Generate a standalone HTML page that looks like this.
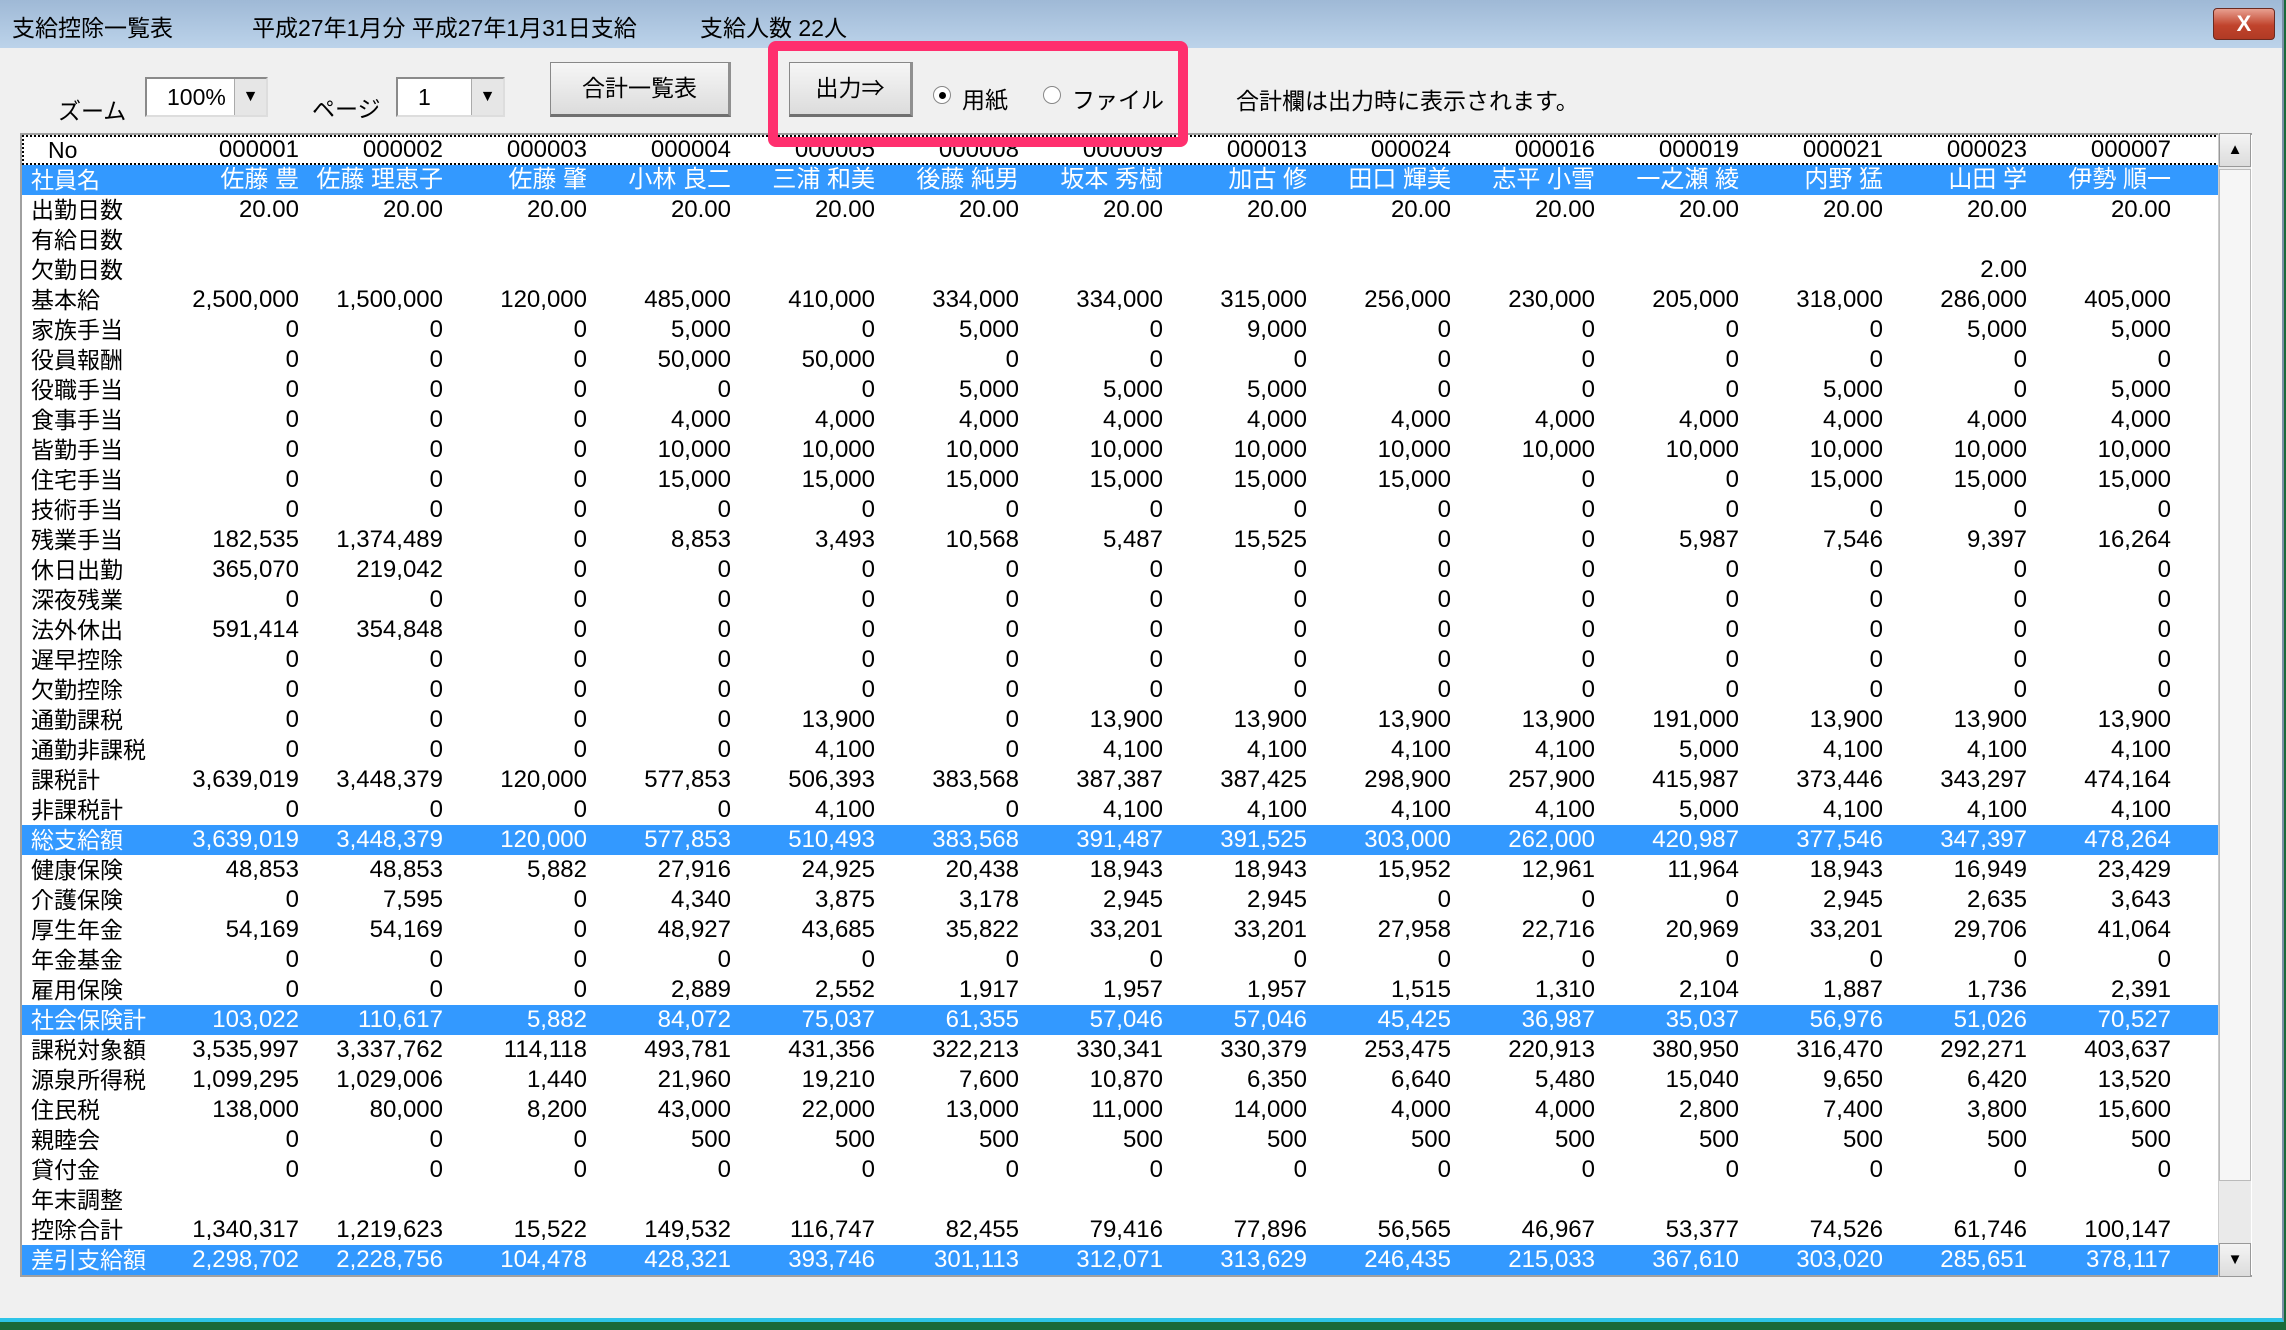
<!DOCTYPE html>
<html><head><meta charset="utf-8">
<style>
*{margin:0;padding:0;box-sizing:border-box}
body{width:2286px;height:1330px;background:#1a6a3a;position:relative;overflow:hidden;font-family:"Liberation Sans","Noto Sans CJK JP",sans-serif;color:#000}
.win{position:absolute;left:0;top:0;width:2284px;height:1322px;background:#f0f0f0;border-right:2px solid #7a8fa8;border-bottom:4px solid #2ec4e8}
.title{position:absolute;left:0;top:0;width:100%;height:48px;background:linear-gradient(#9fb9d6,#bcd3ea);}
.title span{position:absolute;top:9px;font-size:23px}
.close{position:absolute;left:2213px;top:8px;width:62px;height:32px;background:linear-gradient(#e8a090,#c0432c 55%,#b03a24);border:1px solid #6a2a20;border-radius:4px;color:#fff;font-size:22px;font-weight:bold;text-align:center;line-height:30px}
.lbl{position:absolute;font-size:23px}
.combo{position:absolute;top:77px;height:40px;background:#fff;border:2px solid #8a8a8a;border-right-color:#ddd;border-bottom-color:#ddd;font-size:23px;line-height:36px;padding-left:20px}
.combo .ar{position:absolute;right:0;top:0;width:32px;height:36px;background:#e6e6e6;border-left:1px solid #aaa;font-size:16px;text-align:center;line-height:36px}
.btn{position:absolute;top:62px;height:55px;background:linear-gradient(#f6f6f6,#dcdcdc);border:1px solid #888;border-bottom:3px solid #707070;border-right:3px solid #909090;font-size:23px;text-align:center;line-height:50px}
.radio{position:absolute;top:86px;width:18px;height:18px;border-radius:50%;border:1px solid #888;background:#fff}
.pink{position:absolute;left:768px;top:41px;width:420px;height:106px;border:10px solid #ff2f6e;border-radius:8px;z-index:5}
.tbl{position:absolute;left:20px;top:133px;width:2232px;height:1144px;background:#fff;border:2px solid #a0a0a0;border-right:none;overflow:hidden}
.r{position:absolute;left:133px;height:30px;width:2100px;font-size:24px;line-height:30px;white-space:nowrap}
.r b{position:absolute;left:-124px;font-weight:normal;font-size:23px}
.r i{font-style:normal;display:inline-block;width:144px;text-align:right}
.hl{background:#3399ff;color:#fff;left:-2px;padding-left:135px;width:2200px}
.hl b{left:11px}
.sb{position:absolute;left:2218px;top:133px;width:33px;height:1144px;background:#eaeaea;border-left:1px solid #ccc}
.sbb{position:absolute;left:0;width:32px;height:34px;background:linear-gradient(#f4f4f4,#dcdcdc);border:1px solid #999;font-size:15px;text-align:center;line-height:32px}
.thumb{position:absolute;left:0;top:36px;width:32px;height:1012px;background:#f6f6f6;border:1px solid #bbb}
</style></head><body>
<div class="win">
<div class="title"><span style="left:12px">支給控除一覧表</span><span style="left:252px">平成27年1月分 平成27年1月31日支給</span><span style="left:700px">支給人数 22人</span><div class="close">X</div></div>
<div class="lbl" style="left:58px;top:92px">ズーム</div>
<div class="combo" style="left:145px;width:123px">100%<div class="ar">▼</div></div>
<div class="lbl" style="left:312px;top:90px">ページ</div>
<div class="combo" style="left:396px;width:109px">1<div class="ar">▼</div></div>
<div class="btn" style="left:550px;width:181px">合計一覧表</div>
<div class="btn" style="left:789px;width:124px">出力⇒</div>
<div class="radio" style="left:933px"><div style="position:absolute;left:5px;top:5px;width:7px;height:7px;border-radius:50%;background:#000"></div></div>
<div class="lbl" style="left:962px;top:81px">用紙</div>
<div class="radio" style="left:1043px"></div>
<div class="lbl" style="left:1072px;top:81px">ファイル</div>
<div class="lbl" style="left:1236px;top:82px">合計欄は出力時に表示されます。</div>
<div class="pink"></div>
<div class="tbl">
<div class="r" style="top:0;border:2px dotted #000;left:0;padding-left:131px;width:2198px;line-height:26px"><b style="left:24px">No</b><i>000001</i><i>000002</i><i>000003</i><i>000004</i><i>000005</i><i>000008</i><i>000009</i><i>000013</i><i>000024</i><i>000016</i><i>000019</i><i>000021</i><i>000023</i><i>000007</i></div>
<div class="r hl" style="top:30px"><b>社員名</b><i>佐藤 豊</i><i>佐藤 理恵子</i><i>佐藤 肇</i><i>小林 良二</i><i>三浦 和美</i><i>後藤 純男</i><i>坂本 秀樹</i><i>加古 修</i><i>田口 輝美</i><i>志平 小雪</i><i>一之瀬 綾</i><i>内野 猛</i><i>山田 学</i><i>伊勢 順一</i></div>
<div class="r" style="top:60px"><b>出勤日数</b><i>20.00</i><i>20.00</i><i>20.00</i><i>20.00</i><i>20.00</i><i>20.00</i><i>20.00</i><i>20.00</i><i>20.00</i><i>20.00</i><i>20.00</i><i>20.00</i><i>20.00</i><i>20.00</i></div>
<div class="r" style="top:90px"><b>有給日数</b></div>
<div class="r" style="top:120px"><b>欠勤日数</b><i></i><i></i><i></i><i></i><i></i><i></i><i></i><i></i><i></i><i></i><i></i><i></i><i>2.00</i><i></i></div>
<div class="r" style="top:150px"><b>基本給</b><i>2,500,000</i><i>1,500,000</i><i>120,000</i><i>485,000</i><i>410,000</i><i>334,000</i><i>334,000</i><i>315,000</i><i>256,000</i><i>230,000</i><i>205,000</i><i>318,000</i><i>286,000</i><i>405,000</i></div>
<div class="r" style="top:180px"><b>家族手当</b><i>0</i><i>0</i><i>0</i><i>5,000</i><i>0</i><i>5,000</i><i>0</i><i>9,000</i><i>0</i><i>0</i><i>0</i><i>0</i><i>5,000</i><i>5,000</i></div>
<div class="r" style="top:210px"><b>役員報酬</b><i>0</i><i>0</i><i>0</i><i>50,000</i><i>50,000</i><i>0</i><i>0</i><i>0</i><i>0</i><i>0</i><i>0</i><i>0</i><i>0</i><i>0</i></div>
<div class="r" style="top:240px"><b>役職手当</b><i>0</i><i>0</i><i>0</i><i>0</i><i>0</i><i>5,000</i><i>5,000</i><i>5,000</i><i>0</i><i>0</i><i>0</i><i>5,000</i><i>0</i><i>5,000</i></div>
<div class="r" style="top:270px"><b>食事手当</b><i>0</i><i>0</i><i>0</i><i>4,000</i><i>4,000</i><i>4,000</i><i>4,000</i><i>4,000</i><i>4,000</i><i>4,000</i><i>4,000</i><i>4,000</i><i>4,000</i><i>4,000</i></div>
<div class="r" style="top:300px"><b>皆勤手当</b><i>0</i><i>0</i><i>0</i><i>10,000</i><i>10,000</i><i>10,000</i><i>10,000</i><i>10,000</i><i>10,000</i><i>10,000</i><i>10,000</i><i>10,000</i><i>10,000</i><i>10,000</i></div>
<div class="r" style="top:330px"><b>住宅手当</b><i>0</i><i>0</i><i>0</i><i>15,000</i><i>15,000</i><i>15,000</i><i>15,000</i><i>15,000</i><i>15,000</i><i>0</i><i>0</i><i>15,000</i><i>15,000</i><i>15,000</i></div>
<div class="r" style="top:360px"><b>技術手当</b><i>0</i><i>0</i><i>0</i><i>0</i><i>0</i><i>0</i><i>0</i><i>0</i><i>0</i><i>0</i><i>0</i><i>0</i><i>0</i><i>0</i></div>
<div class="r" style="top:390px"><b>残業手当</b><i>182,535</i><i>1,374,489</i><i>0</i><i>8,853</i><i>3,493</i><i>10,568</i><i>5,487</i><i>15,525</i><i>0</i><i>0</i><i>5,987</i><i>7,546</i><i>9,397</i><i>16,264</i></div>
<div class="r" style="top:420px"><b>休日出勤</b><i>365,070</i><i>219,042</i><i>0</i><i>0</i><i>0</i><i>0</i><i>0</i><i>0</i><i>0</i><i>0</i><i>0</i><i>0</i><i>0</i><i>0</i></div>
<div class="r" style="top:450px"><b>深夜残業</b><i>0</i><i>0</i><i>0</i><i>0</i><i>0</i><i>0</i><i>0</i><i>0</i><i>0</i><i>0</i><i>0</i><i>0</i><i>0</i><i>0</i></div>
<div class="r" style="top:480px"><b>法外休出</b><i>591,414</i><i>354,848</i><i>0</i><i>0</i><i>0</i><i>0</i><i>0</i><i>0</i><i>0</i><i>0</i><i>0</i><i>0</i><i>0</i><i>0</i></div>
<div class="r" style="top:510px"><b>遅早控除</b><i>0</i><i>0</i><i>0</i><i>0</i><i>0</i><i>0</i><i>0</i><i>0</i><i>0</i><i>0</i><i>0</i><i>0</i><i>0</i><i>0</i></div>
<div class="r" style="top:540px"><b>欠勤控除</b><i>0</i><i>0</i><i>0</i><i>0</i><i>0</i><i>0</i><i>0</i><i>0</i><i>0</i><i>0</i><i>0</i><i>0</i><i>0</i><i>0</i></div>
<div class="r" style="top:570px"><b>通勤課税</b><i>0</i><i>0</i><i>0</i><i>0</i><i>13,900</i><i>0</i><i>13,900</i><i>13,900</i><i>13,900</i><i>13,900</i><i>191,000</i><i>13,900</i><i>13,900</i><i>13,900</i></div>
<div class="r" style="top:600px"><b>通勤非課税</b><i>0</i><i>0</i><i>0</i><i>0</i><i>4,100</i><i>0</i><i>4,100</i><i>4,100</i><i>4,100</i><i>4,100</i><i>5,000</i><i>4,100</i><i>4,100</i><i>4,100</i></div>
<div class="r" style="top:630px"><b>課税計</b><i>3,639,019</i><i>3,448,379</i><i>120,000</i><i>577,853</i><i>506,393</i><i>383,568</i><i>387,387</i><i>387,425</i><i>298,900</i><i>257,900</i><i>415,987</i><i>373,446</i><i>343,297</i><i>474,164</i></div>
<div class="r" style="top:660px"><b>非課税計</b><i>0</i><i>0</i><i>0</i><i>0</i><i>4,100</i><i>0</i><i>4,100</i><i>4,100</i><i>4,100</i><i>4,100</i><i>5,000</i><i>4,100</i><i>4,100</i><i>4,100</i></div>
<div class="r hl" style="top:690px"><b>総支給額</b><i>3,639,019</i><i>3,448,379</i><i>120,000</i><i>577,853</i><i>510,493</i><i>383,568</i><i>391,487</i><i>391,525</i><i>303,000</i><i>262,000</i><i>420,987</i><i>377,546</i><i>347,397</i><i>478,264</i></div>
<div class="r" style="top:720px"><b>健康保険</b><i>48,853</i><i>48,853</i><i>5,882</i><i>27,916</i><i>24,925</i><i>20,438</i><i>18,943</i><i>18,943</i><i>15,952</i><i>12,961</i><i>11,964</i><i>18,943</i><i>16,949</i><i>23,429</i></div>
<div class="r" style="top:750px"><b>介護保険</b><i>0</i><i>7,595</i><i>0</i><i>4,340</i><i>3,875</i><i>3,178</i><i>2,945</i><i>2,945</i><i>0</i><i>0</i><i>0</i><i>2,945</i><i>2,635</i><i>3,643</i></div>
<div class="r" style="top:780px"><b>厚生年金</b><i>54,169</i><i>54,169</i><i>0</i><i>48,927</i><i>43,685</i><i>35,822</i><i>33,201</i><i>33,201</i><i>27,958</i><i>22,716</i><i>20,969</i><i>33,201</i><i>29,706</i><i>41,064</i></div>
<div class="r" style="top:810px"><b>年金基金</b><i>0</i><i>0</i><i>0</i><i>0</i><i>0</i><i>0</i><i>0</i><i>0</i><i>0</i><i>0</i><i>0</i><i>0</i><i>0</i><i>0</i></div>
<div class="r" style="top:840px"><b>雇用保険</b><i>0</i><i>0</i><i>0</i><i>2,889</i><i>2,552</i><i>1,917</i><i>1,957</i><i>1,957</i><i>1,515</i><i>1,310</i><i>2,104</i><i>1,887</i><i>1,736</i><i>2,391</i></div>
<div class="r hl" style="top:870px"><b>社会保険計</b><i>103,022</i><i>110,617</i><i>5,882</i><i>84,072</i><i>75,037</i><i>61,355</i><i>57,046</i><i>57,046</i><i>45,425</i><i>36,987</i><i>35,037</i><i>56,976</i><i>51,026</i><i>70,527</i></div>
<div class="r" style="top:900px"><b>課税対象額</b><i>3,535,997</i><i>3,337,762</i><i>114,118</i><i>493,781</i><i>431,356</i><i>322,213</i><i>330,341</i><i>330,379</i><i>253,475</i><i>220,913</i><i>380,950</i><i>316,470</i><i>292,271</i><i>403,637</i></div>
<div class="r" style="top:930px"><b>源泉所得税</b><i>1,099,295</i><i>1,029,006</i><i>1,440</i><i>21,960</i><i>19,210</i><i>7,600</i><i>10,870</i><i>6,350</i><i>6,640</i><i>5,480</i><i>15,040</i><i>9,650</i><i>6,420</i><i>13,520</i></div>
<div class="r" style="top:960px"><b>住民税</b><i>138,000</i><i>80,000</i><i>8,200</i><i>43,000</i><i>22,000</i><i>13,000</i><i>11,000</i><i>14,000</i><i>4,000</i><i>4,000</i><i>2,800</i><i>7,400</i><i>3,800</i><i>15,600</i></div>
<div class="r" style="top:990px"><b>親睦会</b><i>0</i><i>0</i><i>0</i><i>500</i><i>500</i><i>500</i><i>500</i><i>500</i><i>500</i><i>500</i><i>500</i><i>500</i><i>500</i><i>500</i></div>
<div class="r" style="top:1020px"><b>貸付金</b><i>0</i><i>0</i><i>0</i><i>0</i><i>0</i><i>0</i><i>0</i><i>0</i><i>0</i><i>0</i><i>0</i><i>0</i><i>0</i><i>0</i></div>
<div class="r" style="top:1050px"><b>年末調整</b></div>
<div class="r" style="top:1080px"><b>控除合計</b><i>1,340,317</i><i>1,219,623</i><i>15,522</i><i>149,532</i><i>116,747</i><i>82,455</i><i>79,416</i><i>77,896</i><i>56,565</i><i>46,967</i><i>53,377</i><i>74,526</i><i>61,746</i><i>100,147</i></div>
<div class="r hl" style="top:1110px"><b>差引支給額</b><i>2,298,702</i><i>2,228,756</i><i>104,478</i><i>428,321</i><i>393,746</i><i>301,113</i><i>312,071</i><i>313,629</i><i>246,435</i><i>215,033</i><i>367,610</i><i>303,020</i><i>285,651</i><i>378,117</i></div>
</div>
<div class="sb"><div class="sbb" style="top:0">▲</div><div class="thumb"></div><div class="sbb" style="top:1110px">▼</div></div>
</div>
</body></html>
